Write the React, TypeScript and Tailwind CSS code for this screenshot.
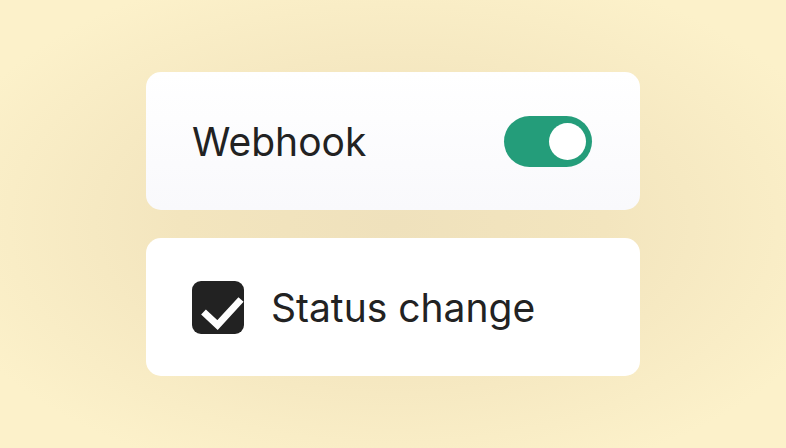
import React from "react";

export default function App() {
  return (
    <div
      className="w-[786px] h-[448px] flex flex-col items-center justify-center gap-[28px] bg-[radial-gradient(ellipse_60%_60%_at_50%_50%,#efe1bc_0%,#f3e5be_45%,#fcf1ca_100%)]"
      style={{ fontFamily: "Inter, 'Noto Sans', sans-serif" }}
    >
      <div className="w-[494px] h-[138px] rounded-[15px] bg-gradient-to-b from-white to-[#f9f9fc] flex items-center justify-between pl-[46px] pr-[48px]">
        <span className="text-[39px] leading-none text-[#222222]">Webhook</span>
        <div className="w-[88px] h-[51px] rounded-full bg-[#249d7a] flex items-center justify-end pr-[6px]">
          <div className="w-[37px] h-[37px] rounded-full bg-white" />
        </div>
      </div>
      <div className="w-[494px] h-[138px] rounded-[15px] bg-white flex items-center gap-[27px] pl-[46px] pr-[48px]">
        <div className="w-[52px] h-[53px] rounded-[9px] bg-[#222222] relative">
          <svg width="52" height="53" viewBox="0 0 52 53" className="absolute inset-0">
            <path d="M11.5 31 L25.5 44 L49 18.5" fill="none" stroke="white" strokeWidth="7" strokeLinecap="butt" strokeLinejoin="miter" />
          </svg>
        </div>
        <span className="text-[39px] leading-none text-[#222222]">Status change</span>
      </div>
    </div>
  );
}
